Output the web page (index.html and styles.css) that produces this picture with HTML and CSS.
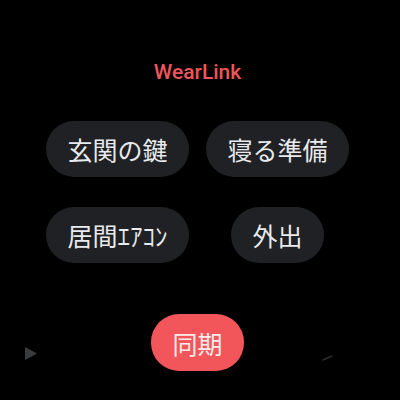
FILE: index.html
```html
<!DOCTYPE html>
<html lang="ja">
<head>
<meta charset="utf-8">
<link rel="stylesheet" href="styles.css">
</head>
<body>
<div class="screen">
  <div class="title">WearLink</div>
  <div class="grid">
    <div class="cell"><button class="chip">玄関の鍵</button></div>
    <div class="cell"><button class="chip">寝る準備</button></div>
    <div class="cell"><button class="chip">居間ｴｱｺﾝ</button></div>
    <div class="cell"><button class="chip">外出</button></div>
  </div>
  <div class="sync-row"><button class="chip sync">同期</button></div>
  <svg class="hint-left" width="14" height="14" viewBox="0 0 14 14"><path d="M1 0 L13 6.5 L1 13 Z" fill="#3a3b3d"/></svg>
  <svg class="hint-right" width="12" height="6" viewBox="0 0 12 6"><path d="M1 5 L10 1" stroke="#2a2b2d" stroke-width="1.5" stroke-linecap="round"/></svg>
</div>
</body>
</html>
```
FILE: styles.css
```css
html, body {
  margin: 0;
  padding: 0;
  background: #000;
}
.screen {
  position: relative;
  width: 400px;
  height: 400px;
  box-sizing: border-box;
  padding: 60px 5px 0 0;
  font-family: "Noto Sans CJK JP", "Noto Sans", sans-serif;
}
.title {
  text-align: center;
  font-family: Roboto, "Noto Sans", sans-serif;
  font-weight: 500;
  font-size: 21px;
  line-height: 24px;
  color: #f0555a;
}
.grid {
  margin-top: 37px;
  display: grid;
  grid-template-columns: 160px 160px;
  justify-content: center;
  row-gap: 30px;
}
.cell {
  display: flex;
  justify-content: center;
}
.chip {
  height: 56px;
  padding: 0 21px;
  border: none;
  border-radius: 28px;
  background: #202124;
  color: #e8eaed;
  font-family: "Noto Sans CJK JP", "Noto Sans", sans-serif;
  font-size: 25px;
  line-height: 56px;
  white-space: nowrap;
  margin: 0;
}
.sync-row {
  margin-top: 51px;
  display: flex;
  justify-content: center;
}
.sync {
  height: 57px;
  background: #f2555a;
  color: #fbecec;
}
.hint-left {
  position: absolute;
  left: 24px;
  top: 347px;
}
.hint-right {
  position: absolute;
  left: 322px;
  top: 355px;
}
```
